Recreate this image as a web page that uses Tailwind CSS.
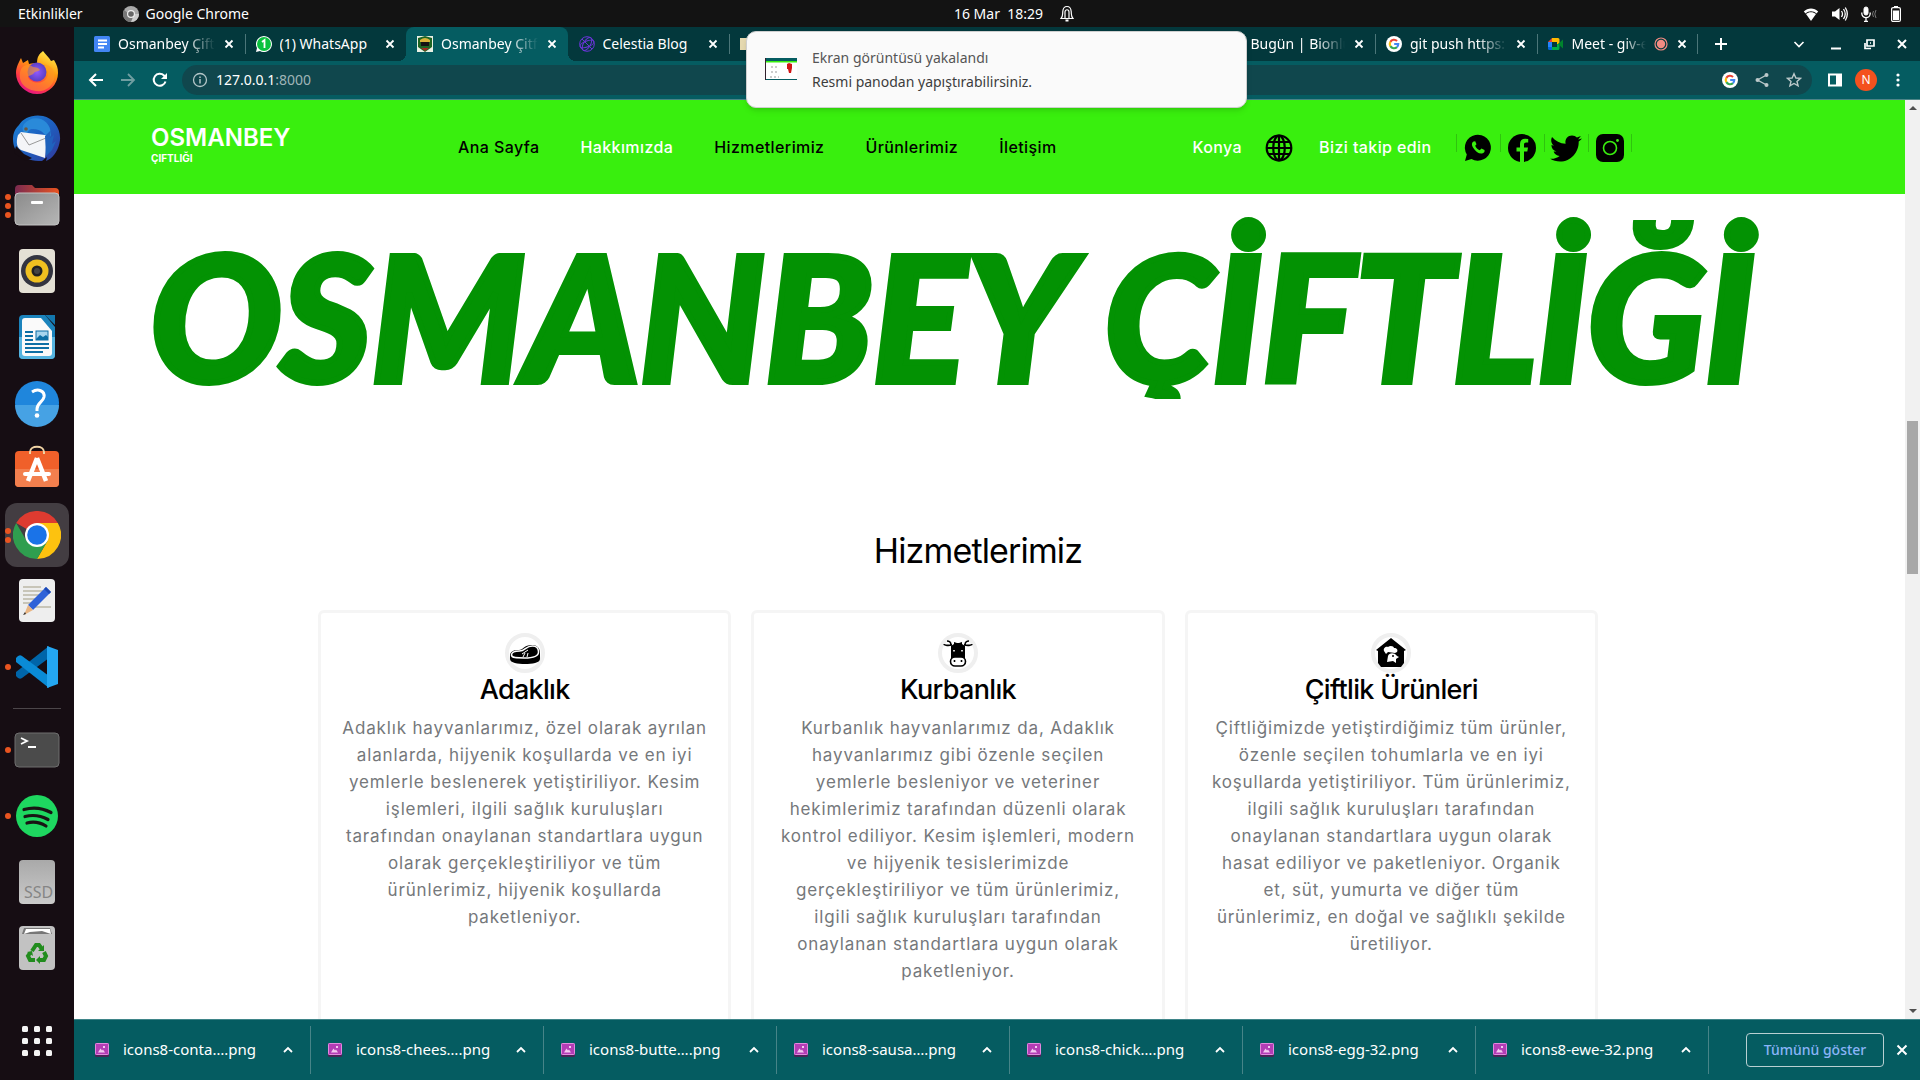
<!DOCTYPE html>
<html lang="tr">
<head>
<meta charset="utf-8">
<title>Osmanbey Çiftliği</title>
<script src="https://cdn.jsdelivr.net/npm/@tailwindcss/browser@4"></script>
</head>
<body class="flex h-screen flex-col overflow-hidden bg-[#160d13] font-['Noto_Sans','Open_Sans',sans-serif] text-sm text-white">

<!-- Shared icons -->
<svg class="hidden" aria-hidden="true">
  <symbol id="close" viewBox="0 0 12 12"><path d="M2.500 2.500l7 7m0-7l-7 7" stroke="currentColor" stroke-width="1.800" fill="none"/></symbol>
  <symbol id="up" viewBox="0 0 12 12"><path d="M2 8l4-4 4 4" stroke="currentColor" stroke-width="1.800" fill="none"/></symbol>
  <symbol id="google" viewBox="0 0 18 18"><circle cx="9" cy="9" r="9" fill="#fff"/><g fill="none" stroke-width="2.400"><path d="M4.900 6.600A4.800 4.800 0 0 1 12.400 5.600" stroke="#ea4335"/><path d="M4.900 11.400a4.800 4.800 0 0 1 0-4.800" stroke="#fbbc05"/><path d="M12.300 12.500a4.800 4.800 0 0 1-7.400-1.100" stroke="#34a853"/><path d="M9.200 9h4.600a4.800 4.800 0 0 1-1.500 3.500" stroke="#4285f4"/></g></symbol>
  <symbol id="png" viewBox="0 0 16 16"><rect x="1" y="2" width="14" height="13" rx="1.500" fill="#4a2358"/><rect x="1" y="1" width="14" height="12" rx="1.500" fill="#b33db5"/><rect x="1.500" y="1.500" width="13" height="11" rx="1" fill="none" stroke="#e28ade"/><path d="M4 10.500l2.500-4 1.500 2 1-1 2 3z" fill="#f3c9f1"/><rect x="9" y="4" width="2" height="2" fill="#f3c9f1"/></symbol>
</svg>

<!-- Desktop top bar -->
<header class="flex h-[27px] shrink-0 items-center bg-[#131313] pr-[18px] pl-[18px]">
  <div class="flex flex-1 items-center">
    <button>Etkinlikler</button>
    <button class="ml-10 flex items-center gap-[7px]">
      <svg class="size-4" viewBox="0 0 16 16"><circle cx="8" cy="8" r="8" fill="#a9a9a9"/><path d="M8 8h8a8 8 0 0 1-8 8z" fill="#ccc"/><path d="M1 4a8 8 0 0 0 7 12l2-5z" fill="#777"/><circle cx="8" cy="8" r="4" fill="#eee"/><circle cx="8" cy="8" r="2.800" fill="#666"/></svg>
      Google Chrome
    </button>
  </div>
  <button class="ml-[108px] flex items-center gap-[17px]">
    <span class="whitespace-pre">16 Mar  18:29</span>
    <svg class="h-[17px] w-3.5" viewBox="0 0 14 17" fill="none" stroke="#fff" stroke-width="1.200"><path d="M1 13.500h12c-2-2-1.500-4-1.800-7C11 3.500 9.500 1.500 7 1.500S3 3.500 2.800 6.500c-.3 3 .2 5-1.800 7z"/><path d="M5 13V7c0-3 4-3 4 0v6"/><path d="M5.500 15.500h3" stroke-width="2"/></svg>
  </button>
  <div class="flex flex-1 items-center justify-end gap-[13px]">
    <svg class="size-4" viewBox="0 0 16 16" fill="#fff"><path d="M8 15L3 8c3-2.500 7-2.500 10 0z"/><path d="M.8 5.500c4-4 10.400-4 14.400 0l-1.700 2c-3.200-3-7.800-3-11 0z"/></svg>
    <svg class="size-4" viewBox="0 0 16 16"><path d="M0 5.500h3L7.500 2v12L3 10.500H0z" fill="#fff"/><path d="M9.500 5q2 3 0 6M11.500 3q3.500 5 0 10M13.300 1.500q4 6.500 0 13" stroke="#fff" stroke-width="1.300" fill="none"/></svg>
    <svg class="size-4" viewBox="0 0 16 16" fill="none" stroke="#fff"><rect x="3" y="1" width="4" height="8" rx="2" fill="#fff"/><path d="M.8 6.500v1a4.200 4.200 0 0 0 8.400 0v-1M5 12v3M3 15.300h4" stroke-width="1.300"/><path d="M12.500 5q-2 3 0 6M15 4q-2.500 4 0 8" stroke="#777"/></svg>
    <svg class="h-4 w-3" viewBox="0 0 12 16"><path d="M4 0h4v2H4z" fill="#fff"/><rect x="1.600" y="1.600" width="8.800" height="13.800" rx="1.500" fill="none" stroke="#fff" stroke-width="1.200"/><rect x="3" y="4.500" width="6" height="9.500" fill="#fff"/></svg>
  </div>
</header>

<div class="flex min-h-0 flex-1">

<!-- Dock -->
<nav class="flex w-[74px] shrink-0 flex-col items-center gap-[18px] pt-[22px]" aria-label="Dock">
  <button class="shrink-0" aria-label="Firefox"><svg class="size-12" viewBox="0 0 48 48"><defs><linearGradient id="ff" x1=".8" y1="0" x2=".3" y2="1"><stop offset="0" stop-color="#fff44f"/><stop offset=".4" stop-color="#ff980e"/><stop offset=".75" stop-color="#ff3647"/><stop offset="1" stop-color="#e31587"/></linearGradient><radialGradient id="ffp"><stop offset="0" stop-color="#9059ff"/><stop offset="1" stop-color="#5b3fc4"/></radialGradient></defs><path d="M30 2c2 3 6 6 8 10l3-1c3 5 4 8 4 13a21 21 0 1 1-42 0C3 18 6 13 8 9l2 5 5-3 1 4c3-1 6-1 8-1 0-6 2-9 6-12z" fill="url(#ff)"/><circle cx="24" cy="23" r="9.500" fill="url(#ffp)"/><path d="M8 20c3-5 9-5 12-2 3 0 6 1 7 3-2 2-5 1-6 3-2 3-6 2-6 4 2 6 13 8 18 2 4-5 2-12-3-15 10 1 13 9 11 16-3 8-10 12-18 11C10 40 4 31 8 20z" fill="#ff9a25" opacity=".6"/></svg></button>
  <button class="shrink-0" aria-label="Thunderbird"><svg class="size-12" viewBox="0 0 48 48"><defs><linearGradient id="tb" x1="0" y1="0" x2="1" y2="1"><stop offset="0" stop-color="#1b85d8"/><stop offset=".5" stop-color="#1d60c0"/><stop offset="1" stop-color="#33389b"/></linearGradient></defs><path d="M6 10C10 3 20-1 30 1c10 2 18 12 17 24-1 9-6 17-12 20l-2 1 1-4-5 4C10 46 0 38 0 24 0 18 2 14 6 10z" fill="url(#tb)"/><path d="M3 31l8 8 8 4-6 3-12-8z" fill="#160d13"/><path d="M11 9C20-2 38 3 38 20l-4 8c0-9-6-14-14-14-4 0-5 2-6 5-4-1-6-5-3-10z" fill="#2a8ad9"/><path d="M8 17l7 1 17 2 2 1-2 22-24-8c-6-3-4-12-3-15z" fill="#f4f5f8"/><path d="M8 18l8 12 17-7" fill="none" stroke="#999" stroke-width="1"/><path d="M32 21l6-6-1 8 4-3-2 9 4-3-4 9-6 6z" fill="#1f63bd"/><circle cx="13" cy="14" r="1.800" fill="#6b5843"/></svg></button>
  <button class="relative shrink-0" aria-label="Dosyalar"><svg class="size-12" viewBox="0 0 48 48"><defs><linearGradient id="fo"><stop stop-color="#7b2a50"/><stop offset="1" stop-color="#e95420"/></linearGradient><linearGradient id="fg" x2="1" y2="1"><stop stop-color="#8b8b8b"/><stop offset="1" stop-color="#b6b6b6"/></linearGradient></defs><path d="M2 8q0-4 4-4h13l3 3h20q4 0 4 4v14H2z" fill="url(#fo)"/><rect x="2" y="12" width="44" height="32" rx="4" fill="url(#fg)" stroke="#c3c3c3"/><rect x="18" y="20" width="12" height="3" rx="1" fill="#fff"/></svg><span class="absolute top-[13px] -left-2 flex flex-col gap-[3px]"><i class="size-1.5 rounded-full bg-[#e95420]"></i><i class="size-1.5 rounded-full bg-[#e95420]"></i><i class="size-1.5 rounded-full bg-[#e95420]"></i></span></button>
  <button class="shrink-0" aria-label="Rhythmbox"><svg class="size-12" viewBox="0 0 48 48"><rect x="6" y="2" width="36" height="44" rx="4" fill="#e4e0d5"/><circle cx="24" cy="24" r="16" fill="#333440"/><circle cx="24" cy="24" r="11.500" fill="#f0c020"/><circle cx="24" cy="24" r="5.500" fill="#222"/><circle cx="24" cy="24" r="3" fill="#444"/></svg></button>
  <button class="shrink-0" aria-label="Writer"><svg class="size-12" viewBox="0 0 48 48"><path d="M10 2h22l10 12v28q0 4-4 4H10q-4 0-4-4V6q0-4 4-4z" fill="#1b83bc"/><path d="M6 24h36v18q0 4-4 4H10q-4 0-4-4z" fill="#55b4e0"/><path d="M32 2h10v10z" fill="#1377ae"/><path d="M9 8q0-3 3-3h16l11 13v22q0 3-3 3H12q-3 0-3-3z" fill="#fafafa"/><path d="M12 19h8m-8 4h8m-8 4h8m-8 4h24M12 35h24M12 39h18" stroke="#0d6fa5" stroke-width="2"/><rect x="23" y="18" width="12" height="9" fill="#a7d5ee" stroke="#0d6fa5"/><path d="M23 26l4-4 3 2 3-2 2 2v3H23z" fill="#0d6fa5"/></svg></button>
  <button class="shrink-0" aria-label="Yardım"><svg class="size-12" viewBox="0 0 48 48"><circle cx="24" cy="24" r="22" fill="#1f86dc"/><path d="M2 26h44a22 22 0 0 1-44 0z" fill="#46a2e4"/><path d="M19 13c6-4 13-1 12 5-1 5-7 6-7 12v2" fill="none" stroke="#fff" stroke-width="3"/><circle cx="24" cy="36.500" r="2.300" fill="#fff"/></svg></button>
  <button class="shrink-0" aria-label="Yazılım"><svg class="size-12" viewBox="0 0 48 48"><rect x="2" y="6" width="44" height="36" rx="4" fill="#f0602a"/><path d="M2 24h44v14q0 4-4 4H6q-4 0-4-4z" fill="#f27f4e"/><path d="M17 9V7c0-7 14-7 14 0v2" fill="none" stroke="#f0d3a4" stroke-width="2"/><path d="M24 13l-9 23M24 13l9 23" stroke="#fff" stroke-width="4.500"/><path d="M12 29h24" stroke="#fff" stroke-width="4" stroke-linecap="round"/></svg></button>
  <button class="relative -my-2 flex size-16 shrink-0 items-center justify-center rounded-xl bg-[#433d42]" aria-label="Google Chrome"><svg class="size-12" viewBox="0 0 48 48"><path d="M24 24L3.200 12A24 24 0 0 1 44.800 12z" fill="#de3b30"/><path d="M24 12h20.800A24 24 0 0 1 24 48l10.400-18z" fill="#fdc20f"/><path d="M3.200 12l10.400 18L34.400 30 24 48A24 24 0 0 1 3.200 12z" fill="#2f9e4f"/><circle cx="24" cy="24" r="12" fill="#fff"/><circle cx="24" cy="24" r="9.800" fill="#1a73e8"/></svg><span class="absolute top-[25px] left-0 flex flex-col gap-[3px]"><i class="size-1.5 rounded-full bg-[#e95420]"></i><i class="size-1.5 rounded-full bg-[#e95420]"></i></span></button>
  <button class="shrink-0" aria-label="Metin Düzenleyici"><svg class="size-12" viewBox="0 0 48 48"><rect x="6" y="2" width="36" height="43" rx="4" fill="#eee"/><path d="M10 10h18M10 14h24M10 18h20M10 22h14M10 26h12M20 30h18" stroke="#c8c5b8" stroke-width="1.800"/><path d="M15 28L33 10l5 5-18 18z" fill="#2f62d8"/><path d="M33 10l5 5-2 2-5-5z" fill="#1c49b5"/><path d="M15 28l5 5-9 5z" fill="#e9b583"/><path d="M12 35l-2 3 3-1z" fill="#333"/></svg></button>
  <button class="relative shrink-0" aria-label="Visual Studio Code"><svg class="size-12" viewBox="0 0 48 48"><path d="M3 33q3 4 6 2L36 15V3L3 29z" fill="#0065a9"/><path d="M3 15q3-4 6-2l27 20v12L3 19z" fill="#0a8bd6"/><path d="M34 3l11 4v34l-11 4z" fill="#24a7f2"/></svg><i class="absolute top-[21px] -left-2 size-1.5 rounded-full bg-[#e95420]"></i></button>
  <hr class="-my-px w-12 shrink-0 border-[#4c464a]">
  <button class="relative shrink-0" aria-label="Uçbirim"><svg class="size-12" viewBox="0 0 48 48"><rect x="2" y="7" width="44" height="34" rx="4" fill="#4b4b4b" stroke="#6e6e6e"/><path d="M8 12l6 3-6 3M15 21h8" stroke="#fff" stroke-width="1.800" fill="none"/></svg><i class="absolute top-[21px] -left-2 size-1.5 rounded-full bg-[#e95420]"></i></button>
  <button class="relative shrink-0" aria-label="Spotify"><svg class="size-12" viewBox="0 0 48 48"><circle cx="24" cy="24" r="21" fill="#1ed760"/><path d="M11 17.500q14-4 27 3M12 24.500q12-3 23 3M14 31q10-2.500 19 3" stroke="#191414" stroke-width="3.200" stroke-linecap="round" fill="none"/></svg><i class="absolute top-[21px] -left-2 size-1.5 rounded-full bg-[#e95420]"></i></button>
  <button class="shrink-0" aria-label="SSD"><svg class="size-12" viewBox="0 0 48 48"><defs><linearGradient id="gr" x2="0" y2="1"><stop stop-color="#a9a9a9"/><stop offset="1" stop-color="#cacaca"/></linearGradient></defs><rect x="6" y="2" width="36" height="44" rx="4" fill="url(#gr)"/><text x="11" y="40" font-size="16" fill="#858585" font-family="Noto Sans">SSD</text></svg></button>
  <button class="shrink-0" aria-label="Çöp"><svg class="size-12" viewBox="0 0 48 48"><rect x="6" y="2" width="36" height="44" rx="4" fill="#c2c2c2"/><path d="M9 10l2-6h26l2 6z" fill="#777"/><path d="M11 10l2-5h24l1 5-9-3-12 1z" fill="#fff"/><g fill="none" stroke="#218c1d" stroke-width="4"><path d="M19 27l4-6h3l3 4"/><path d="M31 28l2 4-2 4h-5"/><path d="M22 36h-5l-2-4 2-3"/></g><path d="M31 21v6h-6zM27 32v8l-4-4zM14 28l5-1 1 5z" fill="#218c1d"/></svg></button>
  <button class="mt-auto mb-[15px] shrink-0" aria-label="Uygulamalar"><svg class="size-12" viewBox="0 0 48 48" fill="#f4f4f4"><g id="dots"><rect x="9" y="9" width="6" height="6" rx="1.500"/><rect x="21" y="9" width="6" height="6" rx="1.500"/><rect x="33" y="9" width="6" height="6" rx="1.500"/></g><use href="#dots" y="12"/><use href="#dots" y="24"/></svg></button>
</nav>

<!-- Browser window -->
<div class="relative flex min-w-0 flex-1 flex-col bg-[#055c61]">

  <!-- Tab strip -->
  <div class="flex h-[34px] shrink-0 items-center bg-[#03383c] pr-3 pl-[9px]">
    <div class="flex h-full max-w-[1615px] flex-1" role="tablist">
      <div role="tab" class="flex min-w-0 flex-1 items-center gap-2 pr-2.5 pl-[11px]">
        <svg class="size-4 shrink-0" viewBox="0 0 16 16"><rect width="16" height="16" rx="1.500" fill="#4285f4"/><path d="M4 4.500h9M4 8h9M4 11.500h6" stroke="#fff" stroke-width="1.800"/></svg>
        <span class="min-w-0 flex-1 overflow-hidden mask-r-from-70% whitespace-nowrap">Osmanbey Çift</span>
        <button class="size-3" aria-label="Kapat"><svg class="size-3"><use href="#close"/></svg></button>
      </div>
      <div role="tab" class="relative flex min-w-0 flex-1 items-center gap-2 pr-2.5 pl-[11px]">
        <i class="absolute left-0 h-5 w-px bg-[#4b7679]"></i>
        <svg class="size-4 shrink-0" viewBox="0 0 16 16"><path d="M0 16l1-4A8 8 0 1 1 4 15z" fill="#fff"/><circle cx="8" cy="8" r="7" fill="#0ac13e"/><path d="M6 6l2.500-2v8" fill="none" stroke="#fff" stroke-width="1.800"/></svg>
        <span class="min-w-0 flex-1 overflow-hidden whitespace-nowrap">(1) WhatsApp</span>
        <button class="size-3" aria-label="Kapat"><svg class="size-3"><use href="#close"/></svg></button>
      </div>
      <div role="tab" aria-selected="true" class="relative flex min-w-0 flex-1 items-center gap-2 rounded-t-lg bg-[#055c61] pr-2.5 pl-[11px]">
        <i class="absolute bottom-0 -left-2 size-2 bg-[radial-gradient(circle_at_0_0,#03383c_8px,#055c61_8px)]"></i>
        <i class="absolute -right-2 bottom-0 size-2 bg-[radial-gradient(circle_at_100%_0,#03383c_8px,#055c61_8px)]"></i>
        <svg class="size-4 shrink-0" viewBox="0 0 16 16"><path d="M0 0h16v16H0z" fill="#e9f0e4"/><path d="M1 2l7-2 7 2v9l-7 5-7-5z" fill="#1d6423"/><path d="M3 4q5-4 10 0v2H3z" fill="#d8b43a"/><path d="M4 6h8v4H4z" fill="#141414"/><path d="M4 12h8l-4 3z" fill="#a32a22"/></svg>
        <span class="min-w-0 flex-1 overflow-hidden mask-r-from-70% whitespace-nowrap">Osmanbey Çitf</span>
        <button class="size-3" aria-label="Kapat"><svg class="size-3"><use href="#close"/></svg></button>
      </div>
      <div role="tab" class="flex min-w-0 flex-1 items-center gap-2 pr-2.5 pl-[11px]">
        <svg class="size-4 shrink-0" viewBox="0 0 16 16" fill="none" stroke="#6a35d8"><circle cx="8" cy="8" r="7.300"/><ellipse cx="8" cy="8" rx="3.500" ry="7.300" transform="rotate(30 8 8)"/><ellipse cx="8" cy="8" rx="7.300" ry="3" transform="rotate(-20 8 8)"/><path d="M3 3l10 10"/></svg>
        <span class="min-w-0 flex-1 overflow-hidden whitespace-nowrap">Celestia Blog</span>
        <button class="size-3" aria-label="Kapat"><svg class="size-3"><use href="#close"/></svg></button>
      </div>
      <div role="tab" class="relative flex min-w-0 flex-1 items-center pr-2.5 pl-[11px]"><i class="absolute left-0 h-5 w-px bg-[#4b7679]"></i><i class="h-3 w-4 bg-[#e5d9b0]"></i></div>
      <div role="tab" class="flex-1 pr-2.5 pl-[11px]"></div>
      <div role="tab" class="flex-1 pr-2.5 pl-[11px]"></div>
      <div role="tab" class="flex min-w-0 flex-1 items-center gap-2 pr-2.5 pl-[11px]">
        <i class="size-4 shrink-0 rounded-full bg-white"></i>
        <span class="min-w-0 flex-1 overflow-hidden mask-r-from-70% pl-0.5 whitespace-nowrap">Bugün | Bionlu</span>
        <button class="size-3" aria-label="Kapat"><svg class="size-3"><use href="#close"/></svg></button>
      </div>
      <div role="tab" class="relative flex min-w-0 flex-1 items-center gap-2 pr-2.5 pl-[11px]">
        <i class="absolute left-0 h-5 w-px bg-[#4b7679]"></i>
        <svg class="size-4 shrink-0"><use href="#google"/></svg>
        <span class="min-w-0 flex-1 overflow-hidden mask-r-from-70% whitespace-nowrap">git push https:</span>
        <button class="size-3" aria-label="Kapat"><svg class="size-3"><use href="#close"/></svg></button>
      </div>
      <div role="tab" class="relative flex min-w-0 flex-1 items-center gap-2 pr-2.5 pl-[11px]">
        <i class="absolute left-0 h-5 w-px bg-[#4b7679]"></i>
        <svg class="size-4 shrink-0" viewBox="0 0 16 16"><path d="M0 6l4-4v4z" fill="#ea4335"/><path d="M0 6h4v5H0z" fill="#2684fc"/><path d="M0 11h4v3H1.500Q0 14 0 12.500z" fill="#0066da"/><path d="M4 2h6q1.500 0 1.500 1.500V7L9 9V6H4z" fill="#ffba00"/><path d="M4 14h6q1.500 0 1.500-1.500V8L9 8v3H4z" fill="#00ac47"/><path d="M10 8l5-4.500v9z" fill="#00832d"/></svg>
        <span class="min-w-0 flex-1 overflow-hidden mask-r-from-70% whitespace-nowrap">Meet - giv-e</span>
        <svg class="size-3.5 shrink-0" viewBox="0 0 14 14"><circle cx="7" cy="7" r="6" fill="none" stroke="#f28b82" stroke-width="1.200"/><circle cx="7" cy="7" r="4.200" fill="#f28b82"/></svg>
        <button class="size-3" aria-label="Kapat"><svg class="size-3"><use href="#close"/></svg></button>
        <i class="absolute right-0 h-5 w-px bg-[#4b7679]"></i>
      </div>
    </div>
    <button class="ml-4 size-3.5 shrink-0" aria-label="Yeni sekme"><svg class="size-3.5" viewBox="0 0 14 14"><path d="M7 1v12M1 7h12" stroke="#fff" stroke-width="2"/></svg></button>
    <div class="ml-auto flex shrink-0 items-center gap-[21px]">
      <button class="mr-1" aria-label="Sekme ara"><svg class="size-3" viewBox="0 0 12 12"><path d="M1.500 4L6 8.500 10.500 4" fill="none" stroke="#fff" stroke-width="1.600"/></svg></button>
      <button aria-label="Küçült"><svg class="size-3" viewBox="0 0 12 12"><path d="M1 10.500h10" stroke="#fff" stroke-width="2"/></svg></button>
      <button aria-label="Geri yükle"><svg class="size-3" viewBox="0 0 12 12" fill="none" stroke="#fff" stroke-width="1.700"><path d="M4 2h7v6H4zM2 5v5.500h6M7 5h1"/></svg></button>
      <button aria-label="Pencereyi kapat"><svg class="size-3" viewBox="0 0 12 12"><path d="M2 2l8 8m0-8l-8 8" stroke="#fff" stroke-width="2"/></svg></button>
    </div>
  </div>

  <!-- Toolbar -->
  <div class="flex h-[39px] shrink-0 items-center border-b border-[#4c8487] pr-3.5 pl-3.5">
    <div class="flex gap-4">
      <button aria-label="Geri"><svg class="size-4" viewBox="0 0 16 16"><path d="M15 8H2m6-6L2 8l6 6" fill="none" stroke="#fff" stroke-width="2"/></svg></button>
      <button aria-label="İleri"><svg class="size-4" viewBox="0 0 16 16"><path d="M1 8h13M8 2l6 6-6 6" fill="none" stroke="#709ea1" stroke-width="1.800"/></svg></button>
      <button aria-label="Yenile"><svg class="size-4" viewBox="0 0 16 16"><path d="M13.500 9.500A6 6 0 1 1 12 3.500l1.500 1.500" fill="none" stroke="#fff" stroke-width="2"/><path d="M15 1v6H9z" fill="#fff"/></svg></button>
    </div>
    <div class="ml-3.5 flex h-[30px] flex-1 items-center rounded-full bg-[#10474d] px-2.5">
      <svg class="size-4 shrink-0" viewBox="0 0 16 16"><circle cx="8" cy="8" r="6.500" fill="none" stroke="#b4c6c8" stroke-width="1.300"/><path d="M8 7v4.500M8 4.500V6" stroke="#b4c6c8" stroke-width="1.500"/></svg>
      <span class="ml-2 flex-1" role="textbox" aria-label="Adres" contenteditable="true">127.0.0.1<span class="text-[#9fb5b7]">:8000</span></span>
      <svg class="size-4"><use href="#google" width="16" height="16"/></svg>
      <svg class="ml-4 size-4" viewBox="0 0 16 16" fill="#bcc9ca"><circle cx="12.500" cy="3" r="2"/><circle cx="3.500" cy="8" r="2"/><circle cx="12.500" cy="13" r="2"/><path d="M12.500 3l-9 5 9 5" fill="none" stroke="#bcc9ca" stroke-width="1.400"/></svg>
      <svg class="ml-4 size-4" viewBox="0 0 16 16"><path d="M8 1.800l1.900 4.200 4.600.4-3.500 3 1.100 4.500L8 11.500l-4.100 2.400L5 9.400l-3.500-3 4.600-.4z" fill="none" stroke="#bcc9ca" stroke-width="1.400"/></svg>
    </div>
    <button class="ml-[15px]" aria-label="Yan panel"><svg class="size-4" viewBox="0 0 16 16"><path d="M2 2.500h12v11H2z" fill="none" stroke="#fff" stroke-width="2"/><path d="M9 2h5v12H9z" fill="#fff"/></svg></button>
    <button class="ml-3 flex size-[22px] items-center justify-center rounded-full bg-[#f4511e] text-xs" aria-label="Profil">N</button>
    <button class="ml-[13px]" aria-label="Menü"><svg class="size-4" viewBox="0 0 16 16" fill="#fff"><circle cx="8" cy="3" r="1.600"/><circle cx="8" cy="8" r="1.600"/><circle cx="8" cy="13" r="1.600"/></svg></button>
  </div>

  <!-- Web page -->
  <div class="flex min-h-0 flex-1 bg-white">
    <main class="min-w-0 flex-1 overflow-hidden bg-white font-[Inter,sans-serif] text-black">
      <header class="flex h-[94px] items-center bg-[#39ef0e] pl-[77px] text-base font-medium">
        <a href="#" class="w-[307px] pb-0.5 font-semibold text-white"><span class="block text-2xl leading-6">OSMANBEY</span><span class="block text-[10px] leading-4 font-bold">ÇIFTLIĞI</span></a>
        <nav class="flex gap-[41px] tracking-wide">
          <a href="#">Ana Sayfa</a><a href="#" class="text-white">Hakkımızda</a><a href="#">Hizmetlerimiz</a><a href="#">Ürünlerimiz</a><a href="#">İletişim</a>
        </nav>
        <span class="ml-[136px] tracking-wide text-white">Konya</span>
        <svg class="mt-0.5 ml-[23px] size-7" viewBox="0 0 28 28" fill="none" stroke="#000" stroke-width="2.200"><circle cx="14" cy="14" r="12.300"/><ellipse cx="14" cy="14" rx="5.800" ry="12.300"/><path d="M14 2v24M2 14h24M4 8h20M4 20h20"/></svg>
        <span class="ml-[26px] tracking-wide text-white">Bizi takip edin</span>
        <div class="mt-0.5 ml-6 flex">
          <a href="#" aria-label="WhatsApp" class="flex w-11 gap-[5px]"><i class="mt-0.5 h-[18px] w-px bg-[#2fc40e]"></i><svg class="size-8 shrink-0" viewBox="0 0 32 32"><path d="M3 29l1.800-6.500A13 13 0 1 1 9.500 27z"/><path d="M11.500 9.500c-2 1-2 3.500-.5 6 2.500 4 6 6.500 9 6 2-.3 3-2 2.500-3.500l-3-1.500-1.800 1.800c-2-.8-3.700-2.500-4.500-4.500l1.300-1.500-1.300-3z" fill="#39ef0e"/></svg></a>
          <a href="#" aria-label="Facebook" class="flex w-11 gap-[5px]"><i class="mt-0.5 h-[18px] w-px bg-[#2fc40e]"></i><svg class="size-8 shrink-0" viewBox="0 0 32 32"><circle cx="16" cy="16" r="14"/><path d="M14 30V19.500h-3.500v-4H14V12c0-3.500 2-5.200 5.200-5.200l3 .3v3.500h-2c-1.700 0-2.200 1-2.200 2v2.900h4l-.7 4H18V30z" fill="#39ef0e"/></svg></a>
          <a href="#" aria-label="Twitter" class="flex w-11 gap-[5px]"><i class="mt-0.5 h-[18px] w-px bg-[#2fc40e]"></i><svg class="size-8 shrink-0" viewBox="0 0 32 32"><path d="M32 6.500q-1.700 2-3.300 2.900C29 20 21 29.500 10 29.500c-3.500 0-7-1-9.800-2.700 3.500.3 6.800-.7 9.400-2.800-3-.2-5.200-2-6-4.500h2.800c-3-.8-5-3.300-5-6.500l2.800.8C1 11.500.6 8 2 5c3.500 4 8 6.500 13.600 6.800C14.500 7 18 3.500 22 3.500c2 0 3.700.8 4.900 2.100l4-1.500-2.800 3.500z"/></svg></a>
          <a href="#" aria-label="Instagram" class="flex gap-[5px]"><i class="mt-0.5 h-[18px] w-px bg-[#2fc40e]"></i><svg class="size-8 shrink-0" viewBox="0 0 32 32"><rect x="2" y="2" width="28" height="28" rx="7"/><circle cx="16" cy="16" r="6.500" fill="none" stroke="#39ef0e" stroke-width="1.600"/><circle cx="23.500" cy="8.500" r="1.400" fill="#39ef0e"/></svg><i class="mt-0.5 h-[18px] w-px bg-[#2fc40e]"></i></a>
        </div>
      </header>

      <h1 class="h-[205px] overflow-hidden pl-[76px] font-[Lato,sans-serif] text-[174px] leading-[242px] font-black whitespace-nowrap text-[#039203] italic [-webkit-text-stroke:6px_#039203]">OSMANBEY ÇİFTLİĞİ</h1>

      <section class="pt-[128px] pr-[23px]">
        <h2 class="text-center text-[34px] leading-12 tracking-tight">Hizmetlerimiz</h2>
        <div class="mx-auto mt-[35px] grid max-w-[1320px] grid-cols-3 gap-5 pr-10 text-center">
          <article class="h-[440px] rounded-md border-3 border-[#f5f5f5] px-5 pt-5">
            <span class="mx-auto flex size-10 items-center justify-center rounded-full border-4 border-[#efefef]"><svg class="size-8" viewBox="0 0 32 32"><path d="M1 19c0-5 4-6 9-6 4 0 5-5 13-5 5 0 8 3 8 8v6c0 4-8 5-15 5S1 26 1 22z"/><path d="M2.500 18c0-3 4-4 8-4 6 0 6-5 13-5 4 0 6 2 6 6 0 5-8 6-14 6-8 0-13 0-13-3z" fill="none" stroke="#fff" stroke-width="1.500"/><path d="M13 17l6-4M14 20l2-4m2 4l1-4" stroke="#fff"/></svg></span>
            <h3 class="text-[27px] leading-[34px] font-medium tracking-tight">Adaklık</h3>
            <p class="mt-2 text-[17px] leading-[27px] tracking-wider text-[#75787b]">Adaklık hayvanlarımız, özel olarak ayrılan alanlarda, hijyenik koşullarda ve en iyi yemlerle beslenerek yetiştiriliyor. Kesim işlemleri, ilgili sağlık kuruluşları tarafından onaylanan standartlara uygun olarak gerçekleştiriliyor ve tüm ürünlerimiz, hijyenik koşullarda paketleniyor.</p>
          </article>
          <article class="h-[440px] rounded-md border-3 border-[#f5f5f5] px-5 pt-5">
            <span class="mx-auto flex size-10 items-center justify-center rounded-full border-4 border-[#efefef]"><svg class="size-8" viewBox="0 0 32 32" fill="none" stroke="#000" stroke-width="1.600"><path d="M9 21V9l3-2v-2l3 1h2l3-1v2l3 2v12z" fill="#000" stroke="none"/><path d="M10 8C5 9 2 8 2 7m7 1c0-3-2-4-4-4M22 8c5 1 8 0 8-1m-7 1c0-3 2-4 4-4"/><rect x="8.500" y="20" width="15" height="9" rx="4.500" fill="#fff"/><path d="M12.500 23v2M19.500 23v2"/><path d="M12 13v1.500M20 13v1.500" stroke="#fff"/></svg></span>
            <h3 class="text-[27px] leading-[34px] font-medium tracking-tight">Kurbanlık</h3>
            <p class="mt-2 text-[17px] leading-[27px] tracking-wider text-[#75787b]">Kurbanlık hayvanlarımız da, Adaklık hayvanlarımız gibi özenle seçilen yemlerle besleniyor ve veteriner hekimlerimiz tarafından düzenli olarak kontrol ediliyor. Kesim işlemleri, modern ve hijyenik tesislerimizde gerçekleştiriliyor ve tüm ürünlerimiz, ilgili&nbsp;sağlık kuruluşları tarafından onaylanan standartlara uygun olarak paketleniyor.</p>
          </article>
          <article class="h-[440px] rounded-md border-3 border-[#f5f5f5] px-5 pt-5">
            <span class="mx-auto flex size-10 items-center justify-center rounded-full border-4 border-[#efefef]"><svg class="size-8" viewBox="0 0 32 32"><path d="M16 1l15 12-2 1v12l-3 4H6l-3-4V14l-2-1z"/><path d="M9 14c-1-3 2-5 4-4 2-2 6-1 6 1 3 0 4 2 3 4l-2 1-7-1-2 2z" fill="#fff"/><path d="M12 25l1-6c1-3 6-4 9 0l2 1-3 2v4l-3-2z" fill="#fff"/><circle cx="18" cy="19" r="1"/></svg></span>
            <h3 class="text-[27px] leading-[34px] font-medium tracking-tight">Çiftlik Ürünleri</h3>
            <p class="mt-2 text-[17px] leading-[27px] tracking-wider text-[#75787b]">Çiftliğimizde yetiştirdiğimiz tüm ürünler, özenle seçilen tohumlarla ve en iyi koşullarda yetiştiriliyor. Tüm ürünlerimiz, ilgili sağlık kuruluşları tarafından onaylanan standartlara uygun olarak hasat ediliyor ve paketleniyor. Organik et,&nbsp;süt, yumurta ve diğer tüm ürünlerimiz,&nbsp;en doğal ve sağlıklı şekilde üretiliyor.</p>
          </article>
        </div>
      </section>
    </main>

    <!-- Scrollbar -->
    <div class="flex w-[15px] shrink-0 flex-col items-center justify-between bg-[#f1f1f1] py-1" aria-hidden="true">
      <svg class="size-2" viewBox="0 0 8 8"><path d="M0 6l4-4 4 4z" fill="#505050"/></svg>
      <div class="-mt-[125px] h-[153px] w-[11px] bg-[#a8a8a8]"></div>
      <svg class="size-2" viewBox="0 0 8 8"><path d="M0 2l4 4 4-4z" fill="#505050"/></svg>
    </div>
  </div>

  <!-- Download shelf -->
  <footer class="flex h-[61px] shrink-0 items-center border-t border-[#3f8589] pl-1 text-[15px]">
    <div class="flex h-12 max-w-[1631px] flex-1">
      <div class="flex min-w-0 flex-1 items-center border-r border-[#478488] px-4"><svg class="size-4"><use href="#png"/></svg><span class="ml-[13px] flex-1 whitespace-nowrap">icons8-conta….png</span><button aria-label="Seçenekler"><svg class="size-3"><use href="#up"/></svg></button></div>
      <div class="flex min-w-0 flex-1 items-center border-r border-[#478488] px-4"><svg class="size-4"><use href="#png"/></svg><span class="ml-[13px] flex-1 whitespace-nowrap">icons8-chees….png</span><button aria-label="Seçenekler"><svg class="size-3"><use href="#up"/></svg></button></div>
      <div class="flex min-w-0 flex-1 items-center border-r border-[#478488] px-4"><svg class="size-4"><use href="#png"/></svg><span class="ml-[13px] flex-1 whitespace-nowrap">icons8-butte….png</span><button aria-label="Seçenekler"><svg class="size-3"><use href="#up"/></svg></button></div>
      <div class="flex min-w-0 flex-1 items-center border-r border-[#478488] px-4"><svg class="size-4"><use href="#png"/></svg><span class="ml-[13px] flex-1 whitespace-nowrap">icons8-sausa….png</span><button aria-label="Seçenekler"><svg class="size-3"><use href="#up"/></svg></button></div>
      <div class="flex min-w-0 flex-1 items-center border-r border-[#478488] px-4"><svg class="size-4"><use href="#png"/></svg><span class="ml-[13px] flex-1 whitespace-nowrap">icons8-chick….png</span><button aria-label="Seçenekler"><svg class="size-3"><use href="#up"/></svg></button></div>
      <div class="flex min-w-0 flex-1 items-center border-r border-[#478488] px-4"><svg class="size-4"><use href="#png"/></svg><span class="ml-[13px] flex-1 whitespace-nowrap">icons8-egg-32.png</span><button aria-label="Seçenekler"><svg class="size-3"><use href="#up"/></svg></button></div>
      <div class="flex min-w-0 flex-1 items-center border-r border-[#478488] px-4"><svg class="size-4"><use href="#png"/></svg><span class="ml-[13px] flex-1 whitespace-nowrap">icons8-ewe-32.png</span><button aria-label="Seçenekler"><svg class="size-3"><use href="#up"/></svg></button></div>
    </div>
    <button class="ml-auto h-[34px] w-[138px] shrink-0 rounded border border-[#b9d0d2] text-sm font-medium text-[#8ab4f8]">Tümünü göster</button>
    <button class="mx-3 shrink-0" aria-label="Kapat"><svg class="size-3" viewBox="0 0 12 12"><path d="M1.500 1.500l9 9m0-9l-9 9" stroke="#fff" stroke-width="2"/></svg></button>
  </footer>
</div>
</div>

<!-- Desktop notification -->
<aside class="absolute top-[31px] left-1/2 flex h-[77px] w-[501px] -translate-x-[214px] items-center gap-[15px] rounded-[10px] border border-[#cfcfcf] bg-[#fafafa] pl-[18px] text-[#3d3d3d] shadow-md">
  <svg class="h-6 w-8" viewBox="0 0 32 24"><path d="M0 0h32v22H0z" fill="#fff"/><path d="M0 0h32v3H0zM0 21h32v1H0z" fill="#055c61"/><path d="M1 3h31v1.500H1z" fill="#39ef0e"/><path d="M0 0h1v22H0z" fill="#31202c"/><path d="M22 6l2-1 3 1v4l-1 5h-2l-1-4h-1z" fill="#d01414"/><path d="M6 9h8M6 14h8M5 19h9" stroke="#999" stroke-dasharray="2 2"/></svg>
  <div class="leading-6"><p class="text-[#555]">Ekran görüntüsü yakalandı</p><p>Resmi panodan yapıştırabilirsiniz.</p></div>
</aside>
</body>
</html>
